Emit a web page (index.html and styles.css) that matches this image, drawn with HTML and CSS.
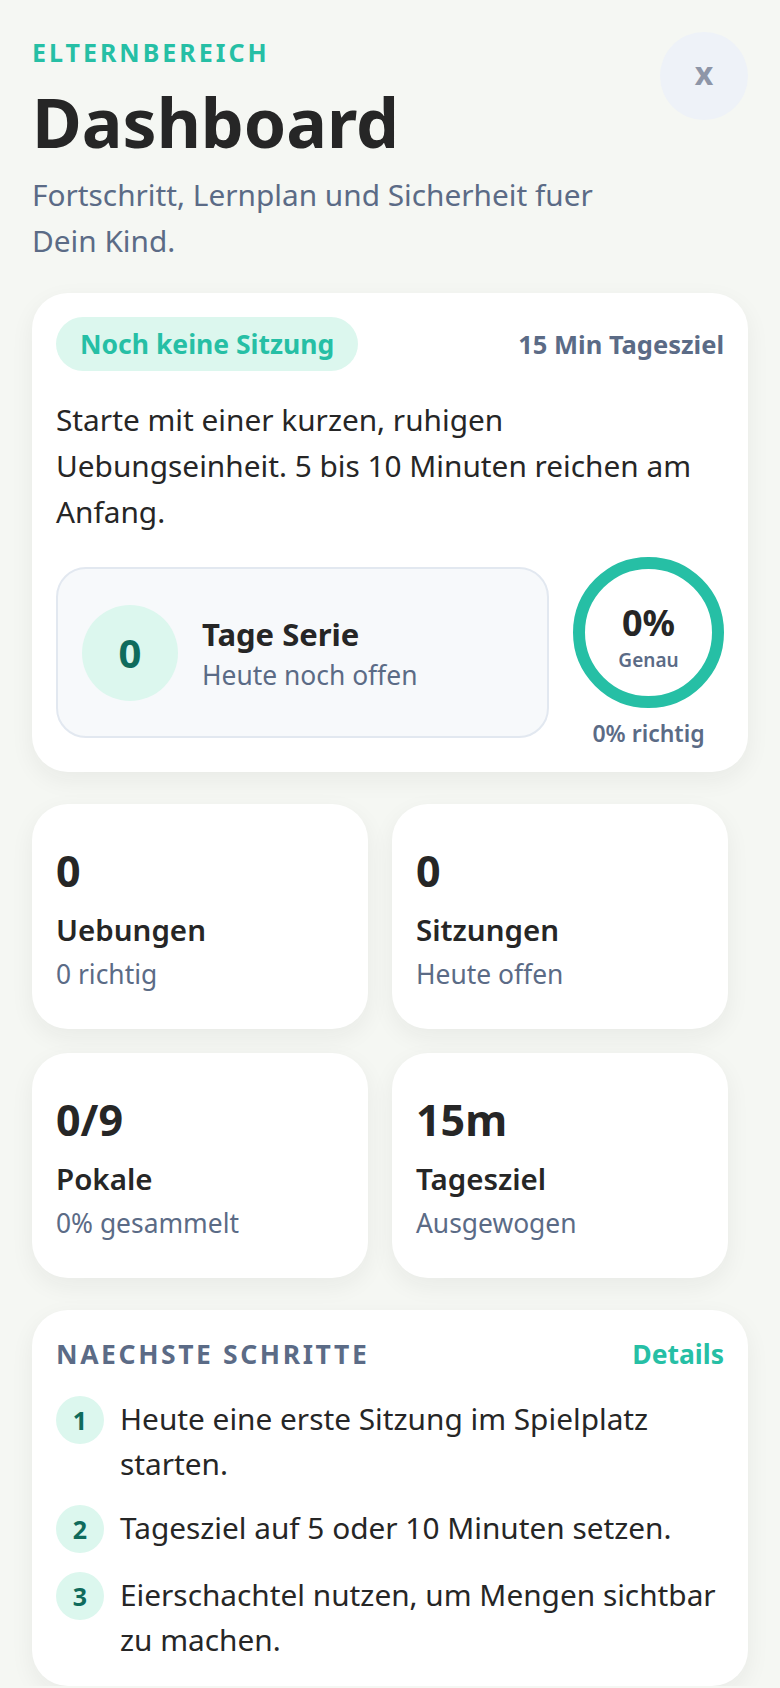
FILE: index.html
```html
<!DOCTYPE html>
<html lang="de">
<head>
  <meta charset="UTF-8">
  <meta name="viewport" content="width=device-width, initial-scale=1.0">
  <title>Elternbereich - Dashboard</title>
  <link rel="stylesheet" href="styles.css">
</head>
<body>
  <main class="page">
    <header class="top">
      <div class="top-text">
        <div class="eyebrow">Elternbereich</div>
        <h1>Dashboard</h1>
        <p class="lead">Fortschritt, Lernplan und Sicherheit fuer Dein Kind.</p>
      </div>
      <button class="close">x</button>
    </header>

    <section class="card today">
      <div class="today-head">
        <span class="pill">Noch keine Sitzung</span>
        <span class="goal">15 Min Tagesziel</span>
      </div>
      <p class="today-text">Starte mit einer kurzen, ruhigen Uebungseinheit. 5 bis 10 Minuten reichen am Anfang.</p>
      <div class="today-row">
        <div class="streak">
          <div class="streak-num">0</div>
          <div>
            <div class="streak-title">Tage Serie</div>
            <div class="streak-sub">Heute noch offen</div>
          </div>
        </div>
        <div class="ring-wrap">
          <div class="ring">
            <div class="ring-value">0%</div>
            <div class="ring-label">Genau</div>
          </div>
          <div class="ring-caption">0% richtig</div>
        </div>
      </div>
    </section>

    <section class="stats">
      <div class="card stat">
        <div class="stat-value">0</div>
        <div class="stat-title">Uebungen</div>
        <div class="stat-sub">0 richtig</div>
      </div>
      <div class="card stat">
        <div class="stat-value">0</div>
        <div class="stat-title">Sitzungen</div>
        <div class="stat-sub">Heute offen</div>
      </div>
      <div class="card stat">
        <div class="stat-value">0/9</div>
        <div class="stat-title">Pokale</div>
        <div class="stat-sub">0% gesammelt</div>
      </div>
      <div class="card stat">
        <div class="stat-value">15m</div>
        <div class="stat-title">Tagesziel</div>
        <div class="stat-sub">Ausgewogen</div>
      </div>
    </section>

    <section class="card steps">
      <div class="steps-head">
        <span class="steps-title">Naechste Schritte</span>
        <a class="details" href="#">Details</a>
      </div>
      <ol class="step-list">
        <li><span class="step-num">1</span><span>Heute eine erste Sitzung im Spielplatz starten.</span></li>
        <li><span class="step-num">2</span><span>Tagesziel auf 5 oder 10 Minuten setzen.</span></li>
        <li><span class="step-num">3</span><span>Eierschachtel nutzen, um Mengen sichtbar zu machen.</span></li>
      </ol>
    </section>
  </main>
</body>
</html>
```

FILE: styles.css
```css
* {
  box-sizing: border-box;
}
body {
  margin: 0;
  background: #f5f7f3;
  color: #262626;
  font-family: "Noto Sans", "Open Sans", sans-serif;
}
.page {
  padding: 32px 32px 0;
}
.top {
  display: flex;
  justify-content: space-between;
  align-items: flex-start;
  gap: 24px;
}
.eyebrow {
  margin-top: 4px;
  font-size: 25px;
  line-height: 32px;
  font-weight: 700;
  letter-spacing: 3px;
  text-transform: uppercase;
  color: #26bfa5;
}
h1 {
  margin: 14px 0 0;
  font-size: 68px;
  line-height: 80px;
  font-weight: 700;
  color: #262626;
}
.lead {
  margin: 10px 0 0;
  font-size: 29.8px;
  line-height: 46px;
  color: #5b6b86;
}
.close {
  flex: none;
  width: 88px;
  height: 88px;
  border: none;
  border-radius: 50%;
  background: #eef2f8;
  color: #8e96a8;
  font-family: inherit;
  font-size: 32px;
  font-weight: 700;
  line-height: 1;
  padding: 0 0 6px;
}

.card {
  background: #fff;
  border-radius: 36px;
  box-shadow: 0 8px 24px rgba(30, 40, 30, 0.06);
}
.today {
  margin-top: 29px;
  padding: 24px;
}
.today-head {
  display: flex;
  justify-content: space-between;
  align-items: center;
}
.pill {
  height: 54px;
  padding: 0 24px;
  border-radius: 27px;
  background: #dcf7ee;
  color: #26bfa5;
  font-size: 26.5px;
  line-height: 54px;
  font-weight: 700;
}
.goal {
  font-size: 25.5px;
  font-weight: 700;
  color: #5b6b86;
}
.today-text {
  margin: 26px 0 0;
  font-size: 29.8px;
  line-height: 46px;
}
.today-row {
  display: flex;
  align-items: center;
  gap: 24px;
  margin-top: 22px;
}
.streak {
  flex: 1;
  display: flex;
  align-items: center;
  gap: 24px;
  height: 171px;
  padding: 0 24px;
  background: #f7f9fb;
  border: 2px solid #e2e8f0;
  border-radius: 30px;
}
.streak-num {
  flex: none;
  width: 96px;
  height: 96px;
  border-radius: 50%;
  background: #dcf7ee;
  color: #0f6b5c;
  font-size: 40px;
  font-weight: 700;
  display: flex;
  align-items: center;
  justify-content: center;
}
.streak-title {
  font-size: 31px;
  line-height: 44px;
  font-weight: 700;
}
.streak-sub {
  font-size: 26.4px;
  line-height: 38px;
  color: #5b6b86;
}
.ring-wrap {
  flex: none;
  width: 151px;
  text-align: center;
}
.ring {
  width: 151px;
  height: 151px;
  border: 12px solid #26bfa5;
  border-radius: 50%;
  display: flex;
  flex-direction: column;
  align-items: center;
  justify-content: center;
  padding-top: 8px;
}
.ring-value {
  font-size: 36px;
  line-height: 44px;
  font-weight: 700;
}
.ring-label {
  margin-top: 3px;
  font-size: 19px;
  line-height: 24px;
  font-weight: 600;
  color: #5b6b86;
}
.ring-caption {
  margin-top: 10px;
  font-size: 23px;
  line-height: 30px;
  font-weight: 600;
  color: #5b6b86;
}

.stats {
  display: grid;
  grid-template-columns: 1fr 1fr;
  gap: 24px;
  margin: 32px 20px 0 0;
}
.stat {
  padding: 37px 24px 38px;
}
.stat-value {
  font-size: 43px;
  line-height: 60px;
  font-weight: 700;
}
.stat-title {
  margin-top: 10px;
  font-size: 29.5px;
  line-height: 38px;
  font-weight: 600;
}
.stat-sub {
  margin-top: 8px;
  font-size: 26.4px;
  line-height: 34px;
  color: #5b6b86;
}

.steps {
  margin-top: 32px;
  padding: 24px;
}
.steps-head {
  display: flex;
  justify-content: space-between;
  align-items: center;
  line-height: 40px;
}
.steps-title {
  font-size: 26.5px;
  font-weight: 700;
  letter-spacing: 2.6px;
  text-transform: uppercase;
  color: #5b6b86;
}
.details {
  font-size: 26.5px;
  font-weight: 700;
  color: #26bfa5;
  text-decoration: none;
}
.step-list {
  list-style: none;
  margin: 22px 0 0;
  padding: 0;
  display: flex;
  flex-direction: column;
  gap: 19px;
}
.step-list li {
  display: flex;
  align-items: flex-start;
  gap: 16px;
  font-size: 29.8px;
  line-height: 45px;
}
.step-num {
  flex: none;
  width: 48px;
  height: 48px;
  border-radius: 50%;
  background: #dcf7ee;
  color: #0f6b5c;
  font-size: 25px;
  font-weight: 700;
  line-height: 48px;
  text-align: center;
}
```
